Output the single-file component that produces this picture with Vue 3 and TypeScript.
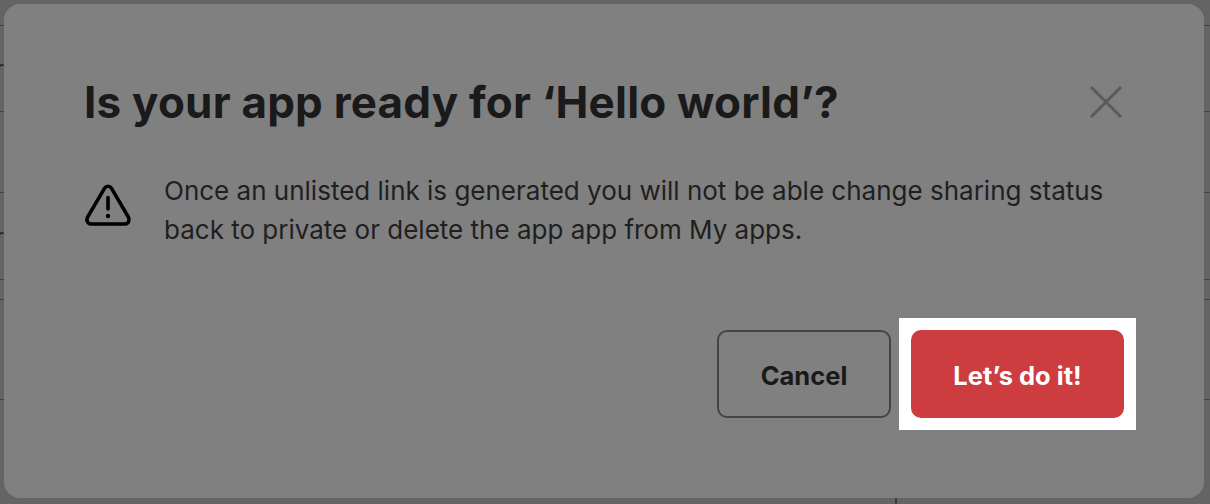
<template>
  <div class="page">
    <!-- lo que asoma por detras del modal -->
    <div class="rows">
      <div v-for="row in filas" :key="row.alto" class="row" :style="{ height: row.alto + 'px' }">
        <span v-if="row.letra" class="row-text">r</span>
      </div>
    </div>
    <div class="vline"></div>

    <div class="overlay">
      <section class="modal" role="dialog" aria-modal="true">
        <header class="modal-head">
          <h1 class="title">Is your app ready for ‘Hello world’?</h1>
          <button class="close" aria-label="Close">
            <svg width="34" height="34" viewBox="0 0 34 34" fill="none">
              <path d="M2 2 L32 32 M32 2 L2 32" stroke="#5a5a5a" stroke-width="3" />
            </svg>
          </button>
        </header>
        <div class="modal-body">
          <svg class="warn" width="48" height="44" viewBox="0 0 48 44" fill="none">
            <path
              d="M20.6 5.2 L3.6 34.2 C1.8 37.4 3.8 41 7.4 41 L40.6 41 C44.2 41 46.2 37.4 44.4 34.2 L27.4 5.2 C25.8 2.6 22.2 2.6 20.6 5.2 Z"
              stroke="#000"
              stroke-width="3.6"
              stroke-linejoin="round"
            />
            <path d="M24 14.5 V26" stroke="#000" stroke-width="3.6" stroke-linecap="round" />
            <circle cx="24" cy="33" r="2.2" fill="#000" />
          </svg>
          <p class="message">
            Once an unlisted link is generated you will not be able change sharing status<br />
            back to private or delete the app app from My apps.
          </p>
        </div>
        <footer class="modal-foot">
          <button class="btn btn-cancel">Cancel</button>
          <div class="highlight">
            <button class="btn btn-primary">Let’s do it!</button>
          </div>
        </footer>
      </section>
    </div>
  </div>
</template>

<script setup lang="ts">
const filas: { alto: number; letra?: boolean }[] = [
  { alto: 26 },
  { alto: 86, letra: true },
  { alto: 81 },
  { alto: 87, letra: true },
  { alto: 20 },
  { alto: 100 },
]
</script>

<style>
html,
body {
  margin: 0;
  height: 100%;
  overflow: hidden;
}
</style>

<style scoped>
.page {
  position: relative;
  width: 1210px;
  height: 504px;
  background: #646464;
  overflow: hidden;
  font-family: Inter, "Liberation Sans", sans-serif;
}

.row {
  box-sizing: border-box;
  border-bottom: 1px solid #444;
  position: relative;
  overflow: hidden;
}

.row-text {
  position: absolute;
  left: -5px;
  bottom: 28px;
  font-size: 24px;
  color: #2a2a2a;
}

.vline {
  position: absolute;
  left: 895px;
  top: 490px;
  width: 2px;
  height: 14px;
  background: #3c3c3c;
}

.overlay {
  position: absolute;
  inset: 0;
  padding: 4px 6px 6px 4px;
  display: flex;
}

.modal {
  flex: 1;
  display: flex;
  flex-direction: column;
  background: #808080;
  border-radius: 16px;
  padding: 72px 80px 80px;
}

.modal-head {
  display: flex;
  justify-content: space-between;
  align-items: center;
  height: 52px;
}

.title {
  margin: 0;
  font-size: 44px;
  font-weight: 700;
  letter-spacing: 0.2px;
  line-height: 52px;
  color: #1a1a1a;
}

.close {
  border: 0;
  padding: 0;
  background: none;
  display: flex;
  margin-right: 1px;
}

.modal-body {
  display: flex;
  align-items: flex-start;
  gap: 32px;
  margin-top: 43px;
}

.warn {
  margin-top: 12px;
  flex: none;
}

.message {
  margin: 0;
  font-size: 26px;
  line-height: 39px;
  color: #1f1f1f;
}

.modal-foot {
  margin-top: auto;
  display: flex;
  justify-content: flex-end;
  align-items: center;
  gap: 20px;
}

.btn {
  box-sizing: border-box;
  height: 88px;
  padding: 2px 0 0;
  border-radius: 10px;
  font-family: inherit;
  font-size: 25.5px;
  font-weight: 700;
}

.btn-cancel {
  width: 174px;
  background: transparent;
  border: 2px solid #444;
  color: #1a1a1a;
}

.highlight {
  background: #fff;
  padding: 12px;
  margin: -12px;
}

.btn-primary {
  display: block;
  width: 213px;
  border: 0;
  background: #cd3c3f;
  color: #fff;
}
</style>
